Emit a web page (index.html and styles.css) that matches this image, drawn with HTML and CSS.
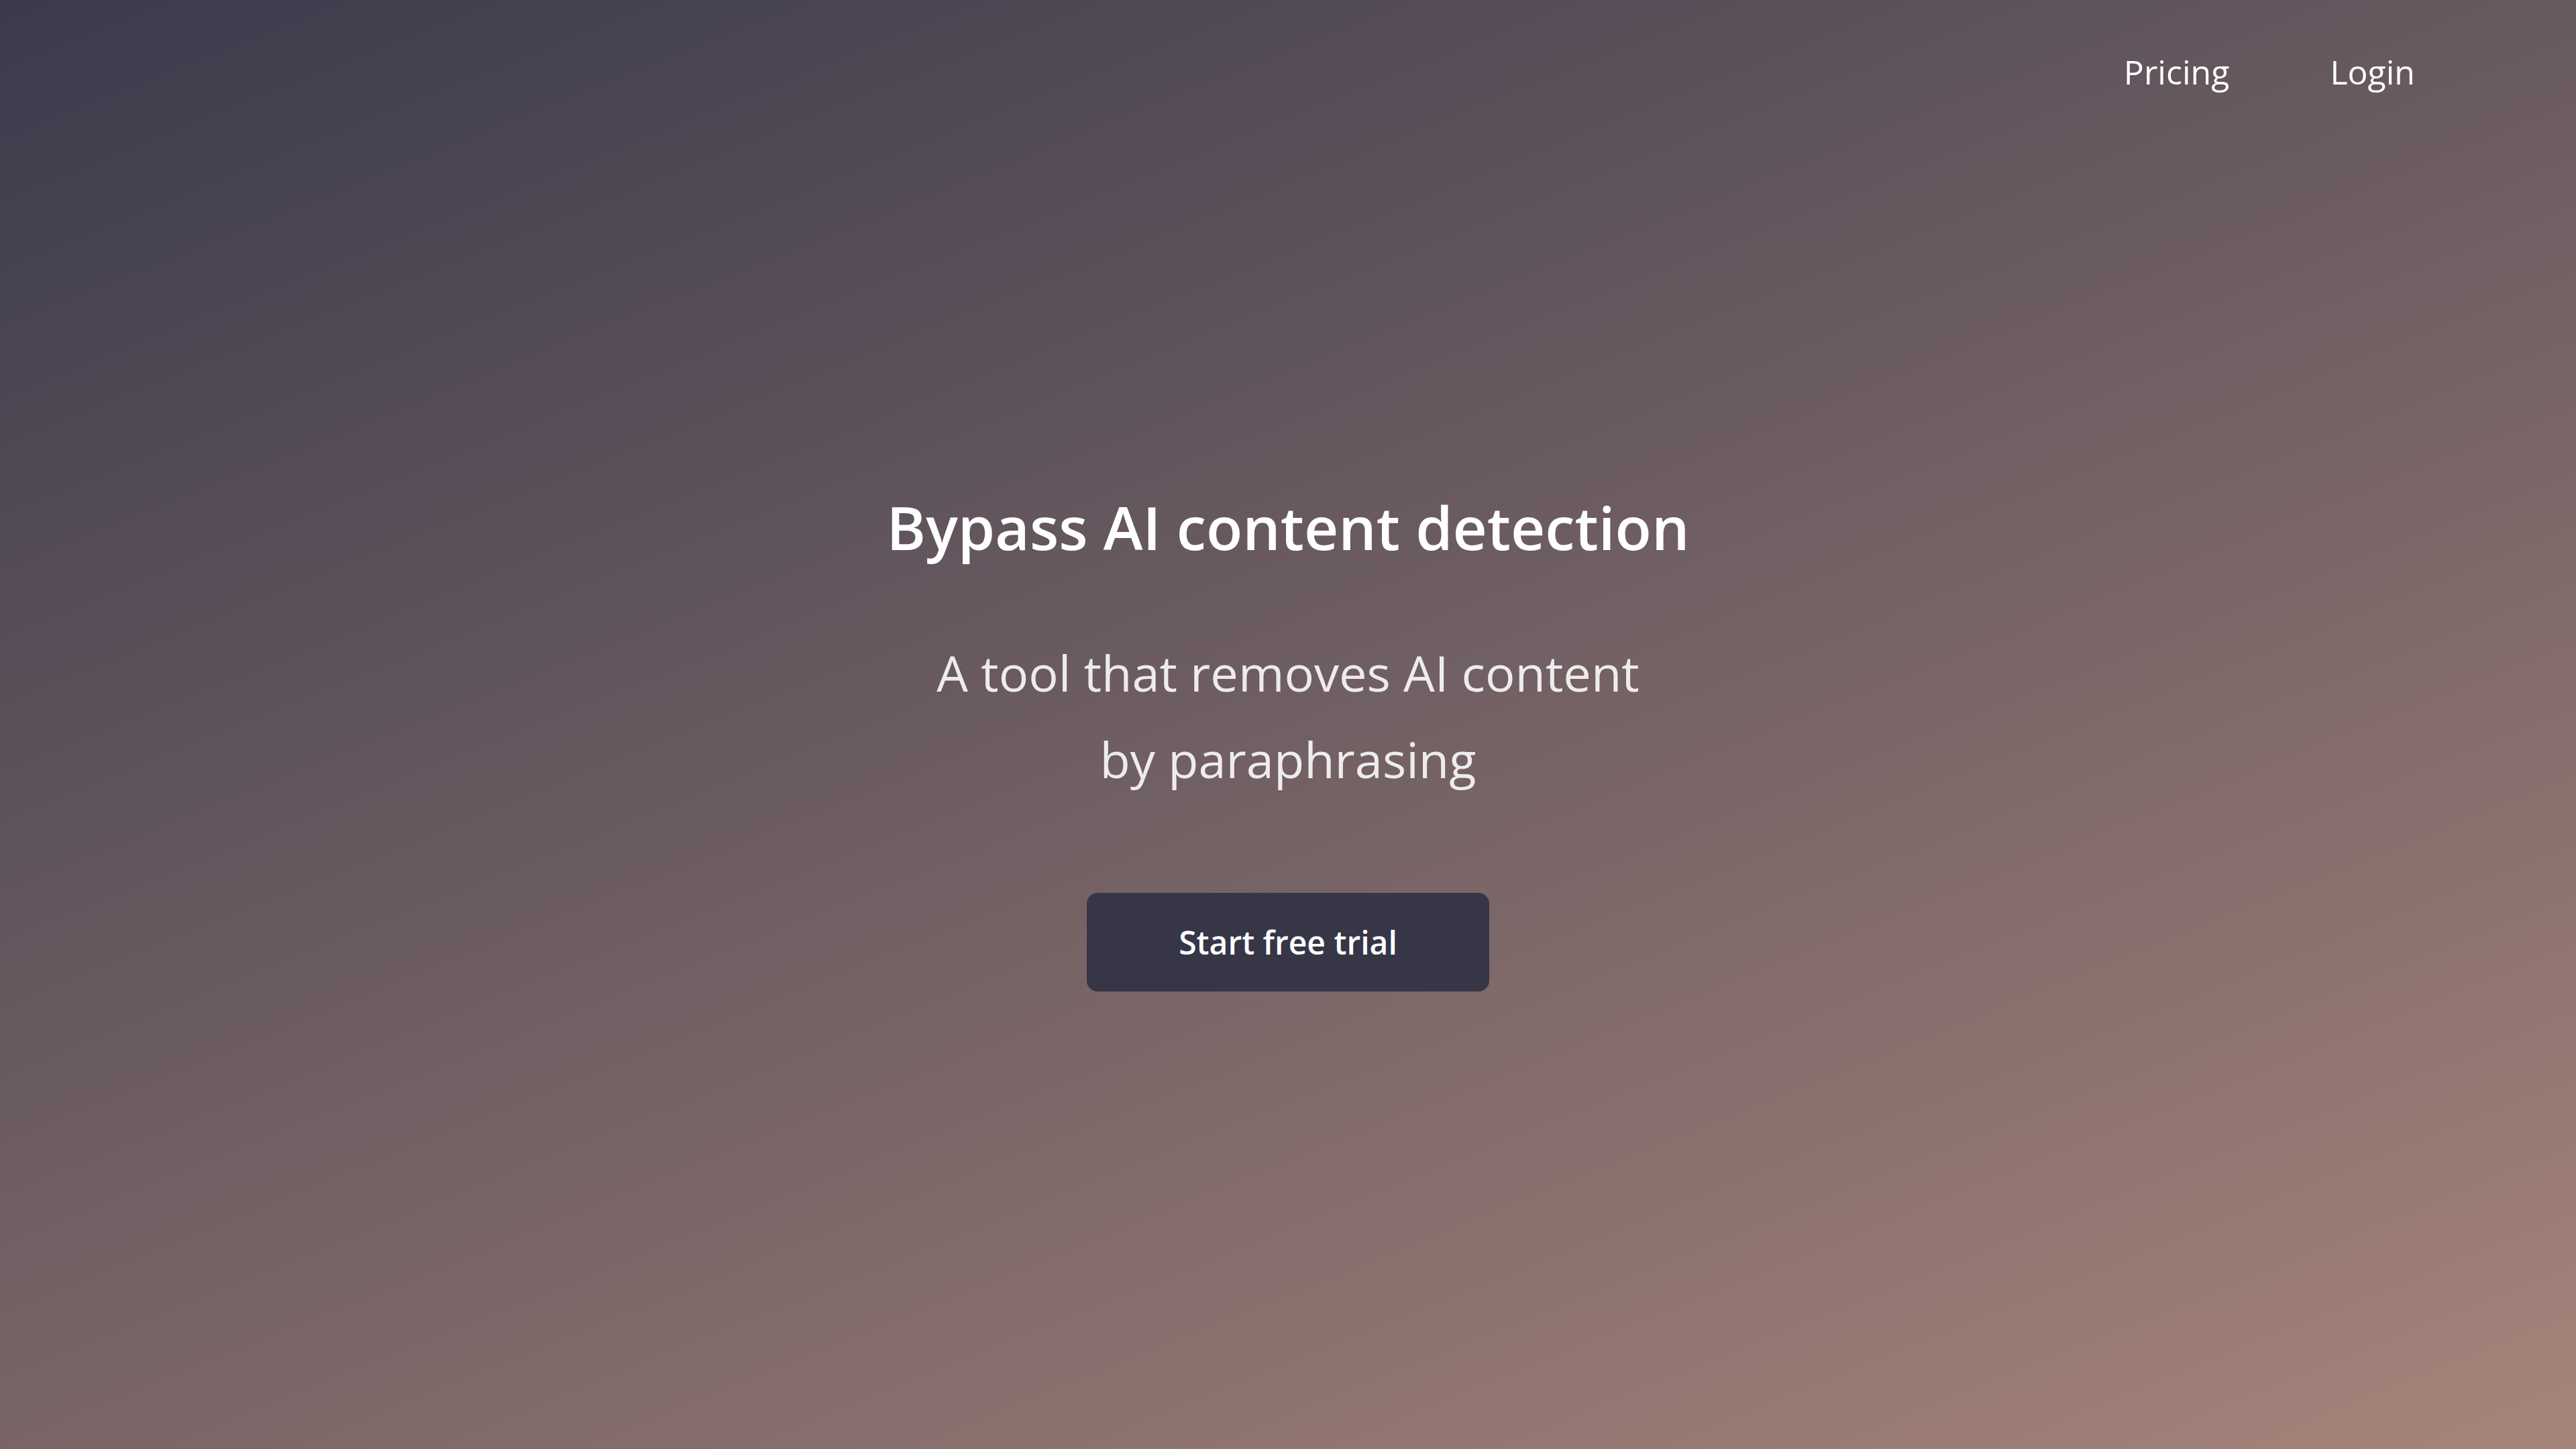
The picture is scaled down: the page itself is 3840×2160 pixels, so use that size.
FILE: index.html
```html
<!DOCTYPE html>
<html lang="en">
<head>
<meta charset="utf-8">
<title>Bypass AI content detection</title>
<link rel="stylesheet" href="styles.css">
</head>
<body>
<div class="page">
  <header class="topbar">
    <nav class="nav">
      <a class="nav-link" href="#">Pricing</a>
      <a class="nav-link" href="#">Login</a>
    </nav>
  </header>
  <main class="hero">
    <h1 class="hero-title">Bypass AI content detection</h1>
    <p class="hero-sub">A tool that removes AI content<br>by paraphrasing</p>
    <a class="cta" href="#">Start free trial</a>
  </main>
</div>
</body>
</html>
```

FILE: styles.css
```css
html, body {
  margin: 0;
  padding: 0;
}
body {
  font-family: "Open Sans", "Liberation Sans", sans-serif;
  color: #fff;
}
.page {
  min-height: 100vh;
  background: linear-gradient(158deg, #3b3a4c 0%, #705f63 50%, #a6847a 100%);
  display: flex;
  flex-direction: column;
}
.topbar {
  height: 214px;
  display: flex;
  align-items: center;
  justify-content: flex-end;
  padding-right: 240px;
}
.nav {
  display: flex;
  gap: 150px;
}
.nav-link {
  color: #fff;
  text-decoration: none;
  font-size: 50px;
  font-weight: 400;
}
.hero {
  display: flex;
  flex-direction: column;
  align-items: center;
  text-align: center;
  padding-top: 519px;
}
.hero-title {
  margin: 0;
  font-size: 89px;
  line-height: 1.2;
  font-weight: 600;
}
.hero-sub {
  margin: 98px 0 0;
  font-size: 74px;
  line-height: 129px;
  font-weight: 400;
  color: rgba(255, 255, 255, 0.88);
}
.cta {
  margin-top: 135px;
  width: 600px;
  height: 147px;
  box-sizing: border-box;
  display: flex;
  align-items: center;
  justify-content: center;
  background: #363647;
  border-radius: 16px;
  color: #fff;
  text-decoration: none;
  font-size: 48px;
  font-weight: 600;
}
```
